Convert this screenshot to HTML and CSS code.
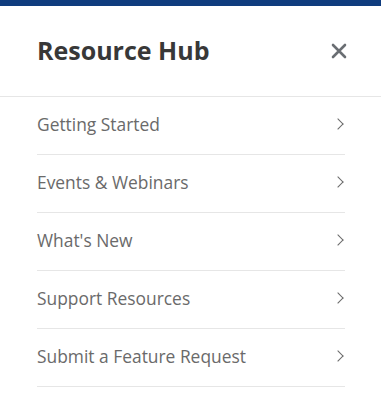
FILE: index.html
```html
<!DOCTYPE html>
<html lang="en">
<head>
  <meta charset="UTF-8" />
  <title>Resource Hub</title>
  <link rel="stylesheet" href="styles.css">
</head>
<body>
  <div class="top-bar"></div>
  <div class="hub-panel">
    <div class="hub-header">
      <h2>Resource Hub</h2>
      <button class="close-btn" aria-label="Close">
        <svg width="16" height="16" viewBox="0 0 16 16">
          <path d="M2 2 L14 14 M14 2 L2 14" stroke="#6a6e73" stroke-width="2.6" stroke-linecap="round"/>
        </svg>
      </button>
    </div>
    <ul class="hub-list">
      <li><a href="#">Getting Started<span class="chev"></span></a></li>
      <li><a href="#">Events &amp; Webinars<span class="chev"></span></a></li>
      <li><a href="#">What's New<span class="chev"></span></a></li>
      <li><a href="#">Support Resources<span class="chev"></span></a></li>
      <li><a href="#">Submit a Feature Request<span class="chev"></span></a></li>
    </ul>
  </div>
</body>
</html>
```

FILE: styles.css
```css
body {
  font-family: 'Open Sans', 'Liberation Sans', sans-serif;
  margin: 0;
  padding: 0;
  background: #fff;
  color: #333;
}

.top-bar {
  height: 6px;
  background: #0f3c7e;
}

.hub-header {
  height: 90px;
  display: flex;
  align-items: center;
  justify-content: space-between;
  padding: 0 34px 0 37px;
  border-bottom: 1px solid #e6e6e6;
}

.hub-header h2 {
  margin: 0 0 2px;
  font-size: 25px;
  font-weight: 700;
  color: #383838;
}

.close-btn {
  border: none;
  background: none;
  padding: 0;
  display: flex;
  cursor: pointer;
}

.hub-list {
  list-style: none;
  margin: 0;
  padding: 0 36px 0 37px;
}

.hub-list li {
  border-bottom: 1px solid #e6e6e6;
}

.hub-list a {
  display: flex;
  align-items: center;
  justify-content: space-between;
  height: 57px;
  padding-bottom: 3px;
  box-sizing: border-box;
  font-size: 17.4px;
  color: #6a6a6a;
  text-decoration: none;
}

.chev {
  width: 7px;
  height: 7px;
  border-top: 1.5px solid #6a6a6a;
  border-right: 1.5px solid #6a6a6a;
  transform: rotate(45deg);
  margin-right: 3px;
}
```
